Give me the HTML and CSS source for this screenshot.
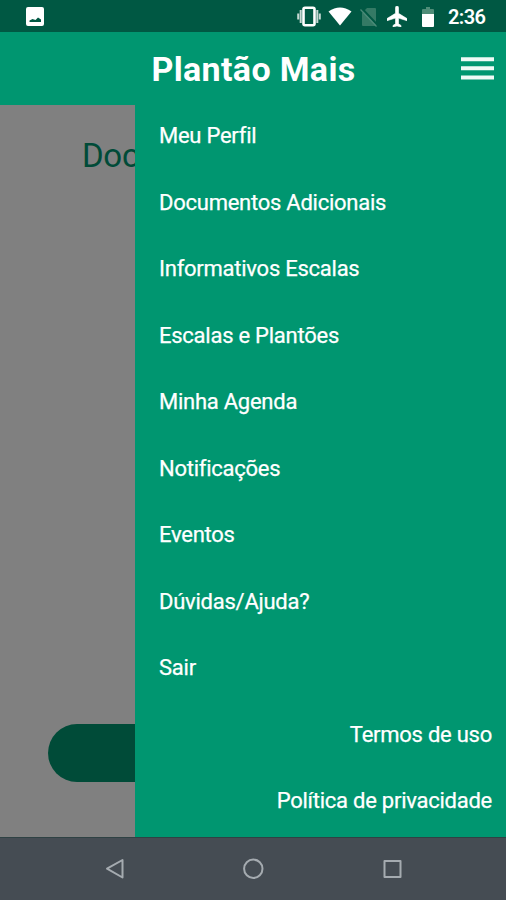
FILE: index.html
```html
<!DOCTYPE html>
<html lang="pt-BR">
<head>
<meta charset="utf-8">
<title>Plantão Mais</title>
<link rel="stylesheet" href="styles.css">
</head>
<body>
<div class="phone">
  <div class="status">
    <svg class="picture" width="18" height="19" viewBox="0 0 18 19"><path fill="#fff" fill-rule="evenodd" d="M2 0h14a2 2 0 0 1 2 2v15a2 2 0 0 1-2 2H2a2 2 0 0 1-2-2V2a2 2 0 0 1 2-2ZM3.500 15h11.500v-2.500l-3-2-2.500 2.500-3-1-3 1.500Z"/></svg>
    <div class="system">
      <svg class="vibrate" width="24" height="21" viewBox="0 0 24 21"><rect x="6.500" y="1.800" width="11" height="17.400" rx="1.500" fill="none" stroke="#fff" stroke-width="2.600"/><path fill="none" stroke="#c5d9d3" stroke-width="2" d="M3.700 4v13M20.300 4v13M1.200 7.500v6M22.800 7.500v6"/></svg>
      <svg class="wifi" width="24" height="19" viewBox="0 0 24 19"><path fill="#fff" d="M.5 4.500Q12-3.500 23.500 4.500L12 18.500Z"/></svg>
      <svg class="sim" width="18" height="20" viewBox="0 0 18 20"><path fill="#347a65" d="M7 1h8q1 0 1 1v16q0 1-1 1H3q-1 0-1-1V6Z"/><path stroke="#005843" stroke-width="2" d="m1.500 1 16 17"/><path stroke="#4b8b78" stroke-width="1.200" d="m.5 2.500 16 17"/></svg>
      <svg class="plane" width="20" height="21" viewBox="2 2 20 20" preserveAspectRatio="none"><path fill="#fff" stroke="#fff" stroke-width=".6" d="M22 16v-2l-8.500-5V3.500a1.500 1.500 0 0 0-3 0V9L2 14v2l8.500-2.500V19L8 20.500V22l4-1 4 1v-1.500L13.500 19v-5.500Z"/></svg>
      <svg class="battery" width="12" height="20" viewBox="0 0 12 20"><path fill="#4f8d78" d="M4 0h4v2h3q1 0 1 1v4H0V3q0-1 1-1h3Z"/><path fill="#fff" d="M0 7h12v12q0 1-1 1H1q-1 0-1-1Z"/></svg>
      <span class="time">2:36</span>
    </div>
  </div>
  <header class="header">
    <h1 class="title">Plantão Mais</h1>
    <svg class="burger" width="33" height="23" viewBox="0 0 33 23"><path stroke="#effaf6" stroke-width="4" d="M0 2.300h33M0 11.300h33M0 20.500h33"/></svg>
  </header>
  <main class="content">
    <section class="page">
      <div class="page-title">Doc</div>
      <div class="button"></div>
    </section>
    <nav class="drawer">
      <a>Meu Perfil</a><a>Documentos Adicionais</a><a>Informativos Escalas</a><a>Escalas e Plantões</a><a>Minha Agenda</a><a>Notificações</a><a>Eventos</a><a>Dúvidas/Ajuda?</a><a>Sair</a><a class="legal">Termos de uso</a><a class="legal">Política de privacidade</a>
    </nav>
  </main>
  <footer class="navbar">
    <svg width="20" height="22" viewBox="0 0 20 22"><path d="M17.500 2v17.500L2 10.700Z"/></svg>
    <svg width="22" height="22" viewBox="0 0 22 22"><circle cx="10.300" cy="10.800" r="9.200"/></svg>
    <svg width="20" height="20" viewBox="0 0 20 20"><path d="M2.500 2h16v16h-16Z"/></svg>
  </footer>
</div>
</body>
</html>
```
FILE: styles.css
```css
* { box-sizing: border-box; }
body { margin: 0; font-family: Roboto, sans-serif; color: #fff; }
.phone { width: 506px; height: 900px; display: flex; flex-direction: column; overflow: hidden; }
.status { height: 32px; background: #005843; display: flex; justify-content: space-between; align-items: center; padding: 1px 20px 0 26px; }
.system { display: flex; align-items: center; }
.wifi { margin-left: 7px; }
.sim { margin-left: 8px; }
.plane { margin-left: 9px; }
.battery { margin-left: 15px; }
.time { width: 38px; font-size: 20px; font-weight: 600; letter-spacing: -.6px; margin-left: 14px; }
.header { height: 73px; background: #009670; display: grid; grid-template-columns: 1fr auto 1fr; align-items: center; padding: 0 12px 0 13px; }
.title { grid-column: 2; font-size: 34px; letter-spacing: .35px; margin: 0; line-height: 40px; white-space: nowrap; }
.burger { justify-self: end; }
.content { height: 732px; display: flex; }
.page { width: 135px; background: #808080; overflow: hidden; display: flex; flex-direction: column; justify-content: space-between; padding: 31px 0 55px 48px; }
.page-title { color: #004b38; font-size: 33px; letter-spacing: -.3px; line-height: 40px; padding-left: 34px; }
.button { width: 410px; height: 58px; border-radius: 29px; background: #004b38; }
.drawer { flex: 1; background: #009670; display: flex; flex-direction: column; padding: 0 14px 0 24px; }
.drawer a { height: 66.5px; line-height: 61px; font-size: 22px; letter-spacing: -.25px; white-space: nowrap; -webkit-text-stroke: .25px #fff; }
.drawer .legal { text-align: right; }
.navbar { height: 63px; background: #454c53; border-top: 1px solid #2f4244; display: flex; justify-content: space-between; align-items: center; padding: 0 104px 0 105px; }
.navbar svg { fill: none; stroke: #a5abb0; stroke-width: 2; stroke-linejoin: round; }
```
